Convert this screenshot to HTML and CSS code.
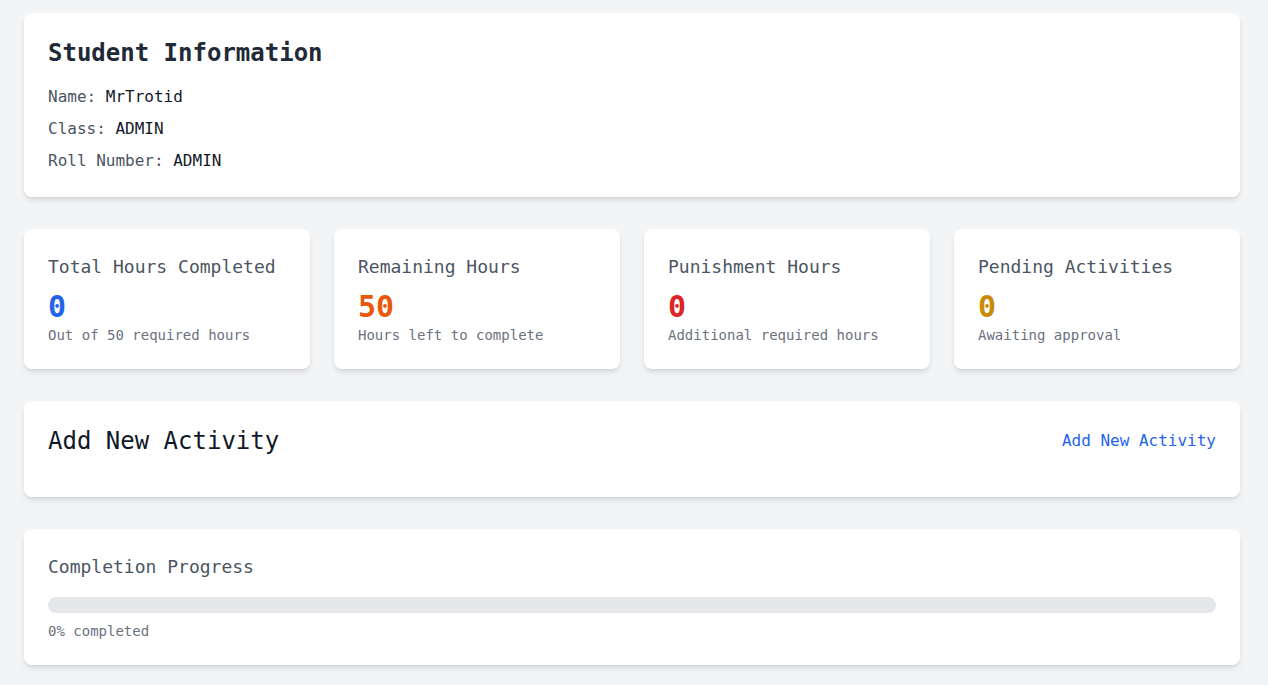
FILE: index.html
```html
<!DOCTYPE html>
<html lang="en">
<head>
  <meta charset="UTF-8">
  <title>Student Dashboard</title>
  <link rel="stylesheet" href="styles.css">
</head>
<body>
  <div class="page">
    <!-- Student info -->
    <div class="card">
      <h2 class="card-heading">Student Information</h2>
      <div class="info-list">
        <p>Name: <span class="info-value">MrTrotid</span></p>
        <p>Class: <span class="info-value">ADMIN</span></p>
        <p>Roll Number: <span class="info-value">ADMIN</span></p>
      </div>
    </div>

    <!-- Stats -->
    <div class="stats">
      <div class="card stat">
        <h3 class="stat-title">Total Hours Completed</h3>
        <p class="stat-value blue">0</p>
        <p class="stat-note">Out of 50 required hours</p>
      </div>
      <div class="card stat">
        <h3 class="stat-title">Remaining Hours</h3>
        <p class="stat-value orange">50</p>
        <p class="stat-note">Hours left to complete</p>
      </div>
      <div class="card stat">
        <h3 class="stat-title">Punishment Hours</h3>
        <p class="stat-value red">0</p>
        <p class="stat-note">Additional required hours</p>
      </div>
      <div class="card stat">
        <h3 class="stat-title">Pending Activities</h3>
        <p class="stat-value yellow">0</p>
        <p class="stat-note">Awaiting approval</p>
      </div>
    </div>

    <!-- Add activity -->
    <div class="card">
      <div class="activity-head">
        <h2 class="activity-heading">Add New Activity</h2>
        <button class="link-btn" type="button">Add New Activity</button>
      </div>
    </div>

    <!-- Progress -->
    <div class="card">
      <h3 class="stat-title progress-title">Completion Progress</h3>
      <div class="progress-track">
        <div class="progress-fill" style="width: 0%"></div>
      </div>
      <p class="stat-note progress-note">0% completed</p>
    </div>
  </div>
</body>
</html>
```

FILE: styles.css
```css
body {
  margin: 0;
  background-color: #f3f4f6;
  font-family: "DejaVu Sans Mono", "Liberation Mono", monospace;
  color: #1f2937;
}
p, h2, h3 {
  margin: 0;
}
.page {
  max-width: 1216px;
  padding: 13px 24px 24px;
  display: flex;
  flex-direction: column;
  gap: 32px;
}
.card {
  background: #fff;
  border-radius: 8px;
  padding: 24px;
  box-shadow: 0 4px 6px -1px rgba(0,0,0,0.1), 0 2px 4px -2px rgba(0,0,0,0.1);
}
.card-heading {
  font-size: 24px;
  line-height: 32px;
  font-weight: 600;
  color: #1f2937;
  margin-bottom: 16px;
}
.info-list {
  display: flex;
  flex-direction: column;
  gap: 8px;
  font-size: 16px;
  line-height: 24px;
  color: #4b5563;
}
.info-value {
  color: #111827;
  font-weight: 500;
}
.stats {
  display: grid;
  grid-template-columns: repeat(4, 1fr);
  gap: 24px;
}
.stat-title {
  font-size: 18px;
  line-height: 28px;
  font-weight: 500;
  color: #4b5563;
}
.stat-value {
  margin-top: 8px;
  font-size: 30px;
  line-height: 36px;
  font-weight: 700;
}
.stat-note {
  font-size: 14px;
  line-height: 20px;
  color: #6b7280;
}
.blue { color: #2563eb; }
.orange { color: #ea580c; }
.red { color: #dc2626; }
.yellow { color: #ca8a04; }
.activity-head {
  display: flex;
  justify-content: space-between;
  align-items: center;
  margin-bottom: 16px;
}
.activity-heading {
  font-size: 24px;
  line-height: 32px;
  font-weight: 500;
  color: #111827;
}
.link-btn {
  border: none;
  background: none;
  padding: 0;
  cursor: pointer;
  font-family: inherit;
  font-size: 16px;
  line-height: 24px;
  color: #2563eb;
}
.progress-title {
  margin-bottom: 16px;
}
.progress-track {
  height: 16px;
  border-radius: 9999px;
  background: #e5e7eb;
  overflow: hidden;
}
.progress-fill {
  height: 100%;
  background: #2563eb;
}
.progress-note {
  margin-top: 8px;
}
```
